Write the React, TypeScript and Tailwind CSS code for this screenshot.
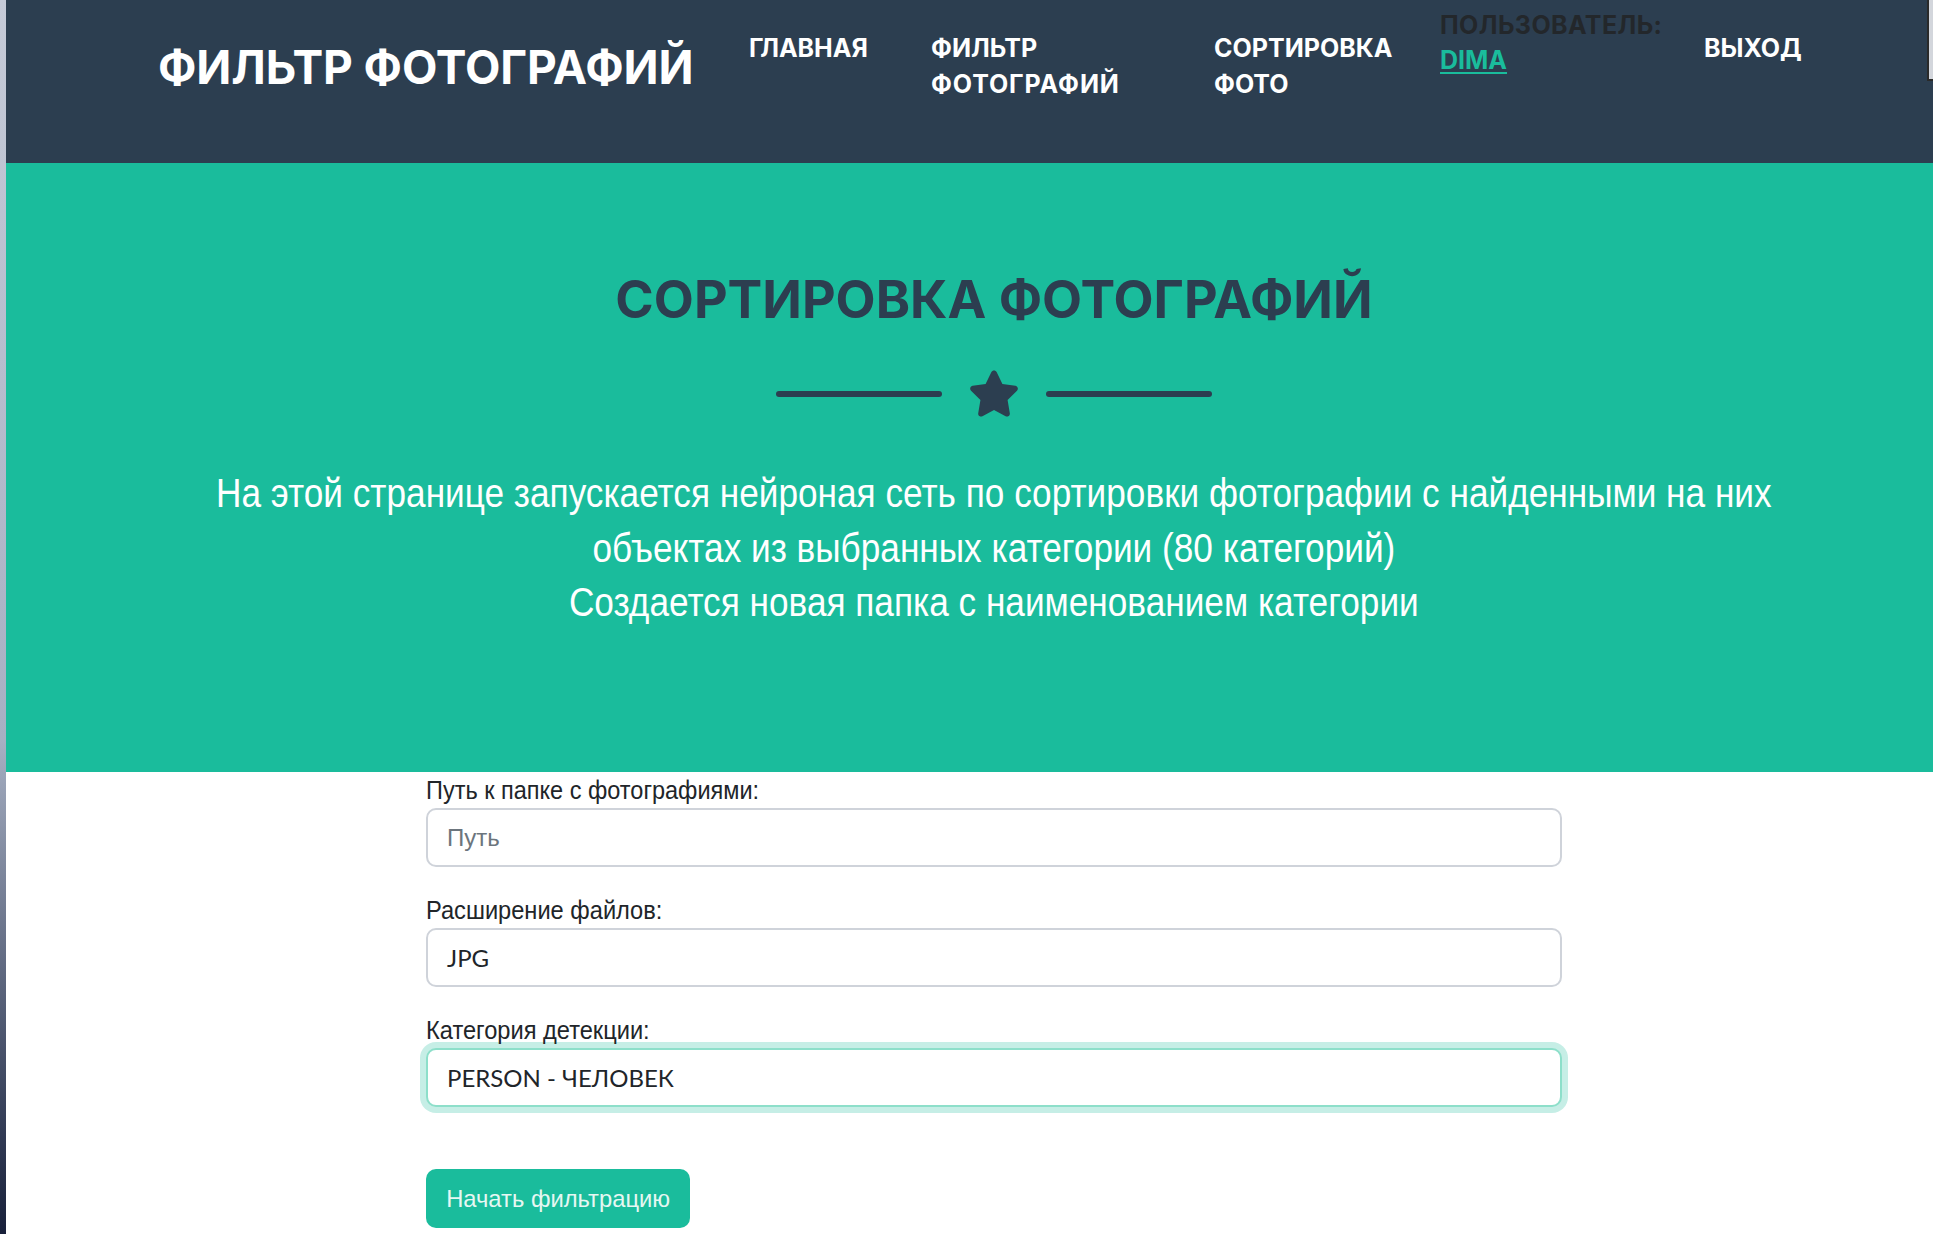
import React from "react";

const HEAD = { fontFamily: "Inter, 'Noto Sans', sans-serif" };
const BODY = { fontFamily: "'Liberation Sans', Arial, sans-serif" };
const LATO = { fontFamily: "Lato, 'Liberation Sans', sans-serif" };

function Star() {
  return (
    <svg viewBox="0 0 576 512" className="w-[52px] h-[47px]" fill="#2c3e50">
      <path d="M316.9 18C311.6 7 300.4 0 288.1 0s-23.4 7-28.8 18L195 150.3 51.4 171.5c-12 1.8-22 10.2-25.7 21.7s-.7 24.2 7.9 32.7L137.8 329 113.2 474.7c-2 12 3 24.2 12.9 31.3s23 8 33.8 2.3l128.3-68.5 128.3 68.5c10.8 5.7 23.9 4.9 33.8-2.3s14.9-19.3 12.9-31.3L438.5 329 542.7 225.9c8.6-8.5 11.7-21.2 7.9-32.7s-13.7-19.9-25.7-21.7L381.2 150.3 316.9 18z" />
    </svg>
  );
}

export default function App() {
  return (
    <div className="flex h-[1234px] w-full overflow-hidden bg-white">
      <div className="w-[6px] shrink-0 bg-linear-to-b from-[#c6cbd8] via-[#a7b0c3] via-60% to-[#18203a]" />
      <div className="relative flex flex-1 flex-col">
        {/* navbar */}
        <nav className="flex h-[163px] shrink-0 items-start bg-[#2c3e50] pl-[152px] text-white" style={HEAD}>
          <div className="w-[591px] pt-[44px]">
            <span className="text-[46px] font-bold leading-none tracking-[-0.1px] text-white">ФИЛЬТР ФОТОГРАФИЙ</span>
          </div>
          <div className="w-[182px] pt-[30px] text-[25px] font-bold leading-[36px]">ГЛАВНАЯ</div>
          <div className="w-[283px] pt-[30px] text-[25px] font-bold leading-[36px]">
            ФИЛЬТР
            <br />
            <span className="tracking-[0.9px]">ФОТОГРАФИЙ</span>
          </div>
          <div className="w-[226px] pt-[30px] text-[25px] font-bold leading-[36px]">
            СОРТИРОВКА
            <br />
            ФОТО
          </div>
          <div className="w-[264px] pt-[8px] text-[25px] font-bold leading-[35px]">
            <div className="tracking-[0.4px] text-[#23272b]">ПОЛЬЗОВАТЕЛЬ:</div>
            <div className="text-[#1abc9c] underline decoration-2 underline-offset-[3px]">DIMA</div>
          </div>
          <div className="pt-[30px] text-[25px] font-bold leading-[36px]">ВЫХОД</div>
        </nav>
        <div className="absolute right-0 top-0 h-[81px] w-[6px] border-b-2 border-l-2 border-[#2a2a2a] bg-[#d3d6dc]" />

        {/* hero */}
        <section className="flex h-[609px] shrink-0 flex-col items-center bg-[#1abc9c] pl-[49px] pt-[111px]">
          <h1 className="text-[52px] font-bold leading-none text-[#2c3e50]" style={HEAD}>
            СОРТИРОВКА ФОТОГРАФИЙ
          </h1>
          <div className="mt-[44px] flex items-center gap-[26px]">
            <div className="h-[6px] w-[166px] rounded-full bg-[#2c3e50]" />
            <Star />
            <div className="h-[6px] w-[166px] rounded-full bg-[#2c3e50]" />
          </div>
          <div className="mt-[49px] scale-x-[0.88] text-center text-[40px] leading-[54.5px] text-white" style={BODY}>
            <p>На этой странице запускается нейроная сеть по сортировки фотографии с найденными на них</p>
            <p>объектах из выбранных категории (80 категорий)</p>
            <p>Создается новая папка с наименованием категории</p>
          </div>
        </section>

        {/* form */}
        <form className="ml-[420px] flex w-[1136px] flex-col">
          <label className="block text-[25px] leading-[36px] text-[#212529]" style={BODY}>
            <span className="inline-block origin-left scale-x-[0.94]">Путь к папке с фотографиями:</span>
          </label>
          <div className="flex h-[59px] items-center rounded-[10px] border-2 border-[#cfd3da] bg-white px-[19px] text-[24px] text-[#6c757d]" style={BODY}>
            Путь
          </div>
          <label className="mt-[25px] block text-[25px] leading-[36px] text-[#212529]" style={BODY}>
            <span className="inline-block origin-left scale-x-[0.945]">Расширение файлов:</span>
          </label>
          <div className="flex h-[59px] items-center rounded-[10px] border-2 border-[#cfd3da] bg-white px-[19px] text-[24px] text-[#212529]" style={LATO}>
            JPG
          </div>
          <label className="mt-[25px] block text-[25px] leading-[36px] text-[#212529]" style={BODY}>
            <span className="inline-block origin-left scale-x-[0.945]">Категория детекции:</span>
          </label>
          <div className="flex h-[59px] items-center rounded-[10px] border-2 border-[#8ddfca] bg-white px-[19px] text-[24px] text-[#212529] shadow-[0_0_0_6px_rgba(26,188,156,0.25)]" style={LATO}>
            PERSON - ЧЕЛОВЕК
          </div>
          <div className="mt-[62px]">
            <button type="button" className="flex h-[59px] w-[264px] items-center justify-center rounded-[10px] bg-[#1abc9c] text-[24px] text-[#e6f7f2]" style={BODY}>
              <span className="inline-block scale-x-[0.99]">Начать фильтрацию</span>
            </button>
          </div>
        </form>
      </div>
    </div>
  );
}
